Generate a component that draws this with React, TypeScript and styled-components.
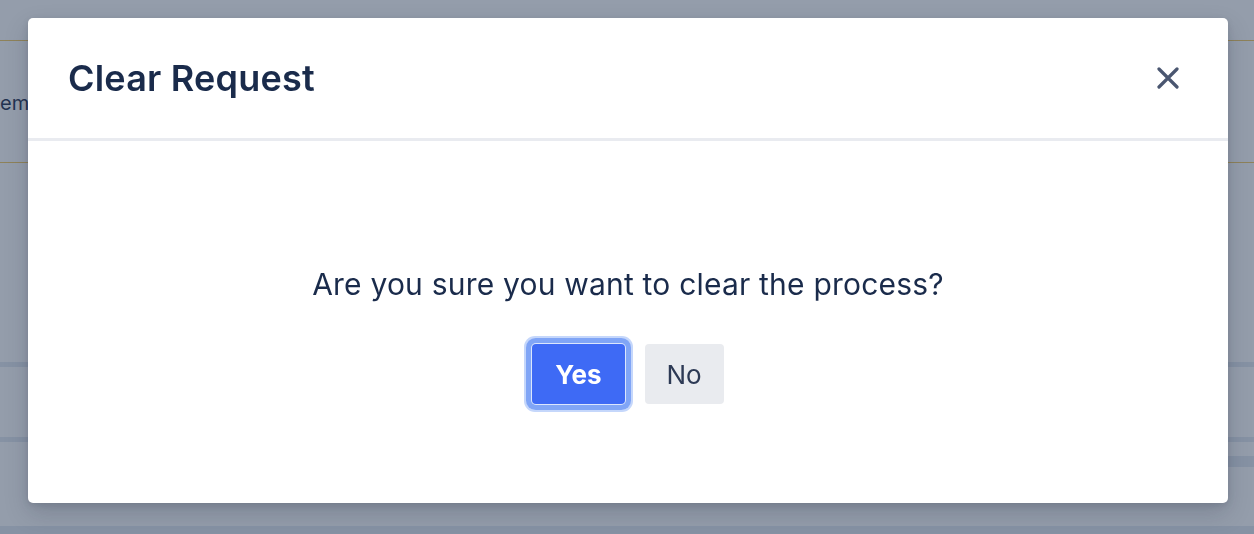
import React from 'react';
import styled, { createGlobalStyle } from 'styled-components';

const GlobalStyle = createGlobalStyle`
  html, body {
    margin: 0;
    padding: 0;
    background: #ffffff;
    font-family: Inter, "Liberation Sans", Arial, sans-serif;
    overflow: hidden;
  }
`;

// page that sits behind the dialog
const Page = styled.div`
  width: 1254px;
  height: 534px;
  padding-top: 40px;
  box-sizing: border-box;
  display: flex;
  flex-direction: column;
`;

const ItemRow = styled.div`
  height: 122px;
  border-top: 1px solid #f3c85c;
  border-bottom: 1px solid #f3c85c;
  display: flex;
  align-items: center;
`;

const ItemCell = styled.div`
  white-space: nowrap;
  font-size: 20px;
  color: #1a2b4b;
  margin-top: 2px;
`;

const Spacer = styled.div<{ $h: number }>`
  height: ${(p) => p.$h}px;
  flex: none;
`;

const Band = styled.div<{ $h: number; $half?: boolean }>`
  height: ${(p) => p.$h}px;
  flex: none;
  background: #e2e8f0;
  width: ${(p) => (p.$half ? '50%' : '100%')};
  align-self: flex-end;
`;

const Overlay = styled.div`
  position: fixed;
  inset: 0;
  background: rgba(41, 59, 87, 0.5);
`;

const Dialog = styled.div`
  position: fixed;
  left: 28px;
  top: 18px;
  width: 1200px;
  height: 485px;
  background: #ffffff;
  border-radius: 5px;
  box-shadow: 0 10px 25px rgba(15, 23, 42, 0.18), 0 2px 6px rgba(15, 23, 42, 0.12);
  display: flex;
  flex-direction: column;
  overflow: hidden;
`;

const Header = styled.div`
  height: 120px;
  flex: none;
  display: flex;
  align-items: center;
  justify-content: space-between;
  padding: 0 40px;
  border-bottom: 3px solid #e9ebf0;
`;

const Title = styled.h2`
  margin: 0;
  font-size: 36px;
  font-weight: 600;
  color: #1a2b4b;
  letter-spacing: 0.2px;
`;

const CloseButton = styled.button`
  width: 40px;
  height: 40px;
  border: none;
  background: transparent;
  padding: 0;
  display: flex;
  align-items: center;
  justify-content: center;
  cursor: pointer;
`;

const Body = styled.div`
  flex: 1;
  display: flex;
  flex-direction: column;
  align-items: center;
  padding-top: 123px;
`;

const Message = styled.p`
  margin: 0;
  font-size: 30px;
  line-height: 40px;
  letter-spacing: 0.2px;
  color: #1a2b4b;
`;

const Actions = styled.div`
  margin-top: 40px;
  display: flex;
  gap: 20px;
`;

const ActionButton = styled.button<{ $primary?: boolean }>`
  height: 60px;
  padding: 0 ${(p) => (p.$primary ? 23 : 22)}px;
  border: none;
  border-radius: 4px;
  font-family: inherit;
  font-size: 26px;
  font-weight: ${(p) => (p.$primary ? 700 : 400)};
  background: ${(p) => (p.$primary ? '#3e6af5' : '#e9ebef')};
  color: ${(p) => (p.$primary ? '#ffffff' : '#2d3a55')};
  box-shadow: ${(p) =>
    p.$primary
      ? '0 0 0 1px #dbe6fd, 0 0 0 6px #80a5f6, 0 0 0 8px #c5d7fb'
      : 'none'};
  cursor: pointer;
`;

const CloseIcon = () => (
  <svg width="22" height="22" viewBox="0 0 22 22">
    <path
      d="M2 2 L20 20 M20 2 L2 20"
      stroke="#4a5670"
      strokeWidth="3.2"
      strokeLinecap="round"
      fill="none"
    />
  </svg>
);

export default function App() {
  return (
    <>
      <GlobalStyle />
      <Page>
        <ItemRow>
          <ItemCell>em</ItemCell>
        </ItemRow>
        <Spacer $h={199} />
        <Band $h={5} />
        <Spacer $h={70} />
        <Band $h={5} />
        <Spacer $h={14} />
        <Band $h={11} $half />
        <Spacer $h={59} />
        <Band $h={8} />
      </Page>
      <Overlay />
      <Dialog role="dialog">
        <Header>
          <Title>Clear Request</Title>
          <CloseButton aria-label="Close">
            <CloseIcon />
          </CloseButton>
        </Header>
        <Body>
          <Message>Are you sure you want to clear the process?</Message>
          <Actions>
            <ActionButton $primary>Yes</ActionButton>
            <ActionButton>No</ActionButton>
          </Actions>
        </Body>
      </Dialog>
    </>
  );
}
